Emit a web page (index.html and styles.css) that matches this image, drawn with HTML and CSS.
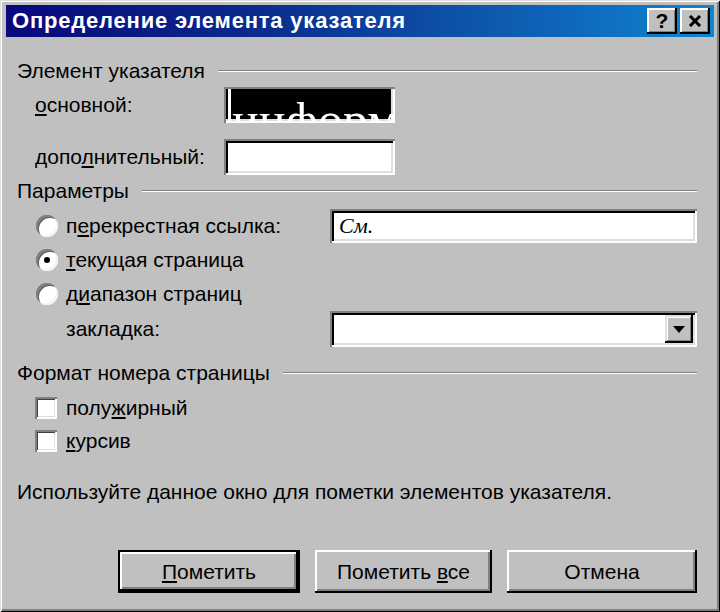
FILE: index.html
```html
<!DOCTYPE html>
<html lang="ru">
<head>
    <meta charset="UTF-8">
    <title>Определение элемента указателя</title>
    <link rel="stylesheet" href="styles.css">
</head>
<body>
    <div class="window">
        <div class="titlebar">
            <span class="title">Определение элемента указателя</span>
            <div class="title-btns">
                <div class="tbtn">?</div>
                <div class="tbtn">
                    <svg width="14" height="12" viewBox="0 0 14 12"><path d="M2 1 L12 11 M12 1 L2 11" stroke="#000" stroke-width="3"/></svg>
                </div>
            </div>
        </div>

        <div class="content">
            <div class="group-head"><span>Элемент указателя</span><i class="rule"></i></div>
            <div class="entry">
                <span class="entry-label"><u>о</u>сновной:</span>
                <div class="field field-sel"><i class="caret"></i><span class="sel-text">информ</span></div>
            </div>
            <div class="entry entry-2">
                <span class="entry-label">допо<u>л</u>нительный:</span>
                <div class="field"></div>
            </div>

            <div class="group-head group-2"><span>Параметры</span><i class="rule"></i></div>
            <div class="opt first">
                <span class="radio"></span>
                <span>п<u>е</u>рекрестная ссылка:</span>
                <div class="field wide"><span class="see">См.</span></div>
            </div>
            <div class="opt">
                <span class="radio checked"></span>
                <span><u>т</u>екущая страница</span>
            </div>
            <div class="opt">
                <span class="radio"></span>
                <span>д<u>и</u>апазон страниц</span>
            </div>
            <div class="opt combo-row">
                <span>закладка:</span>
                <div class="field wide combo">
                    <div class="drop">
                        <svg width="12" height="7" viewBox="0 0 12 7"><polygon points="0,0 12,0 6,7" fill="#000"/></svg>
                    </div>
                </div>
            </div>

            <div class="group-head group-3"><span>Формат номера страницы</span><i class="rule"></i></div>
            <div class="check-row first">
                <span class="check"></span>
                <span>полу<u>ж</u>ирный</span>
            </div>
            <div class="check-row">
                <span class="check"></span>
                <span><u>к</u>урсив</span>
            </div>

            <div class="info">Используйте данное окно для пометки элементов указателя.</div>

            <div class="buttons">
                <div class="btn default"><span><u>П</u>ометить</span></div>
                <div class="btn mid"><span>Пометить <u>в</u>се</span></div>
                <div class="btn last"><span>Отмена</span></div>
            </div>
        </div>
    </div>
</body>
</html>
```

FILE: styles.css
```css
html, body {margin: 0; padding: 0;}
body {font-family: "Liberation Sans", Arial, sans-serif; font-size: 21px; color: #000; background: #c0c0c0;}
u {text-decoration-thickness: 2px; text-underline-offset: 2px;}

.window {
    box-sizing: border-box;
    width: 720px;
    height: 612px;
    padding: 5px 6px;
    background: #c0c0c0;
    box-shadow: inset 1px 1px #dfdfdf, inset -1px -1px #000, inset 2px 2px #fff, inset -3px -3px #808080;
}

.titlebar {
    height: 32px;
    display: flex;
    align-items: center;
    justify-content: space-between;
    padding: 0 4px 0 6px;
    background: linear-gradient(90deg, #08087a 0%, #0a2a8c 35%, #1084d0 100%);
    color: #fff;
}
.title {font-weight: bold; font-size: 22px; letter-spacing: 0.8px;}
.title-btns {display: flex; gap: 3px;}
.tbtn {
    box-sizing: border-box;
    width: 30px;
    height: 26px;
    display: flex;
    align-items: center;
    justify-content: center;
    background: #c0c0c0;
    color: #000;
    font-weight: bold;
    font-size: 21px;
    box-shadow: inset -2px -2px #000, inset 2px 2px #fff, inset -3px -3px #808080;
}

.content {padding: 22px 17px 0 11px;}

.group-head {display: flex; align-items: center; height: 24px;}
.group-2 {margin-top: 4px;}
.group-3 {margin-top: 14px;}
.rule {flex: 1; margin-left: 13px; border-top: 1px solid #808080; border-bottom: 1px solid #fff;}

.entry {display: flex; align-items: center; height: 36px; margin-top: 4px; padding-left: 18px;}
.entry-2 {margin-top: 16px;}
.entry-label {width: 189px;}

.field {
    box-sizing: border-box;
    width: 171px;
    height: 36px;
    background: #fff;
    box-shadow: inset 2px 2px #808080, inset -2px -2px #fff, inset 4px 4px #000, inset -4px -4px #dfdfdf;
}
.field-sel {
    display: flex;
    align-items: flex-start;
    overflow: hidden;
    padding: 2px 4px;
    background: #000;
    color: #fff;
    font-family: "Liberation Serif", serif;
    font-size: 50px;
    line-height: 50px;
    white-space: nowrap;
    box-shadow: inset 2px 2px #808080, inset -2px -2px #fff, inset -4px -4px #dfdfdf;
}
.caret {flex: none; width: 3px; height: 40px; background: #fff; margin-right: 1px;}
.sel-text {margin-top: 6px;}

.opt {display: flex; align-items: center; height: 34px; padding-left: 19px;}
.opt.first {margin-top: 6px;}
.combo-row {height: 36px; padding-left: 49px;}

.radio {
    flex: none;
    width: 22px;
    height: 22px;
    margin-right: 8px;
    border-radius: 50%;
    background: #fff;
    display: flex;
    align-items: center;
    justify-content: center;
    box-shadow: inset 2px 2px #808080, inset -2px -2px #f4f4f4, inset 3px 3px #606060;
}
.radio.checked::after {content: ""; width: 6px; height: 6px; border-radius: 50%; background: #000;}

.wide {width: 367px; margin-left: auto;}
.opt .wide {height: 34px; display: flex; align-items: center; padding-left: 9px;}
.see {font-family: "Liberation Serif", serif; font-style: italic; font-size: 22px;}

.combo.field {height: 36px; justify-content: flex-end; padding: 4px;}
.drop {
    box-sizing: border-box;
    width: 28px;
    height: 28px;
    display: flex;
    align-items: center;
    justify-content: center;
    background: #c0c0c0;
    box-shadow: inset -2px -2px #000, inset 2px 2px #dfdfdf, inset -3px -3px #808080, inset 3px 3px #fff;
}

.check-row {display: flex; align-items: center; height: 33px; padding-left: 18px;}
.check-row.first {margin-top: 6px;}
.check {
    flex: none;
    width: 22px;
    height: 22px;
    margin-right: 9px;
    background: #fff;
    box-shadow: inset 2px 2px #808080, inset -2px -2px #fff, inset 3px 3px #404040, inset -3px -3px #dfdfdf;
}

.info {height: 24px; line-height: 24px; margin-top: 23px;}

.buttons {display: flex; justify-content: flex-end; gap: 15px; margin-top: 46px;}
.btn {
    box-sizing: border-box;
    height: 43px;
    display: flex;
    align-items: center;
    justify-content: center;
    background: #c0c0c0;
    box-shadow: inset -2px -2px #000, inset 2px 2px #fff, inset -4px -4px #808080;
}
.btn.default {
    width: 182px;
    box-shadow: inset 0 0 0 2px #000, inset -4px -4px #000, inset 4px 4px #fff, inset -6px -6px #808080;
}
.btn.mid {width: 177px;}
.btn.last {width: 190px;}
```
